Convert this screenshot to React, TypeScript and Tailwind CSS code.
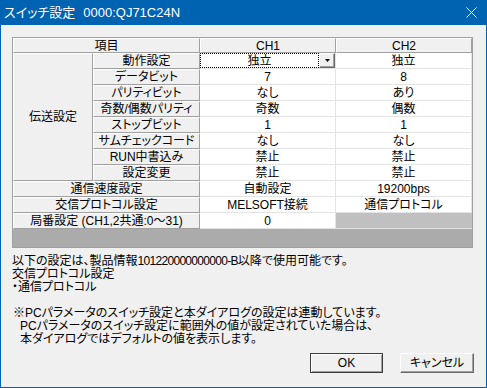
import React from "react";

const hdr =
  "flex items-center justify-center bg-[#f0f0f0] border border-t-white border-l-white border-r-[#a0a0a0] border-b-[#a0a0a0] leading-none";
const cell =
  "flex items-center justify-center bg-white border-r border-b border-[#e3e3e3] leading-none";

const subRows: [string, string, string][] = [
  ["データビット", "7", "8"],
  ["パリティビット", "なし", "あり"],
  ["奇数/偶数パリティ", "奇数", "偶数"],
  ["ストップビット", "1", "1"],
  ["サムチェックコード", "なし", "なし"],
  ["RUN中書込み", "禁止", "禁止"],
  ["設定変更", "禁止", "禁止"],
];

const wideRows: [string, string, string][] = [
  ["通信速度設定", "自動設定", "19200bps"],
  ["交信プロトコル設定", "MELSOFT接続", "通信プロトコル"],
];

function CloseIcon() {
  return (
    <svg width="11" height="11" viewBox="0 0 11 11" className="block">
      <path d="M0.5 0.5 L10.5 10.5 M10.5 0.5 L0.5 10.5" stroke="#fff" strokeWidth="1" />
    </svg>
  );
}

function DropButton() {
  return (
    <div className="flex h-[15px] w-[16px] items-center justify-center border border-t-white border-l-white border-r-[#696969] border-b-[#696969] bg-[#f0f0f0] shadow-[inset_-1px_-1px_0_#a0a0a0]">
      <svg width="5" height="3" viewBox="0 0 5 3" className="block">
        <path d="M0 0 H5 L2.5 3 Z" fill="#000" />
      </svg>
    </div>
  );
}

export default function App() {
  return (
    <div className="flex h-[388px] w-[487px] flex-col bg-[#0063b1] px-px pb-px font-['Liberation_Sans','Noto_Sans_CJK_JP',sans-serif] text-[12px] text-black [font-feature-settings:'palt']">
      {/* title bar */}
      <div className="flex h-[25px] items-center justify-between pl-[3px] pr-[9px] text-white">
        <div className="flex items-center gap-[8px] text-[13px] leading-none">
          <span>スイッチ設定</span>
          <span>0000:QJ71C24N</span>
        </div>
        <CloseIcon />
      </div>

      <div className="flex flex-1 flex-col bg-[#f0f0f0] px-[11px]">
        {/* grid */}
        <div className="mt-[12px] grid w-[461px] grid-cols-[80px_107px_136px_136px] grid-rows-[15px_repeat(11,16px)_18px] border border-[#a0a0a0]">
          <div className={`${hdr} col-span-2`}>項目</div>
          <div className={hdr}>CH1</div>
          <div className={hdr}>CH2</div>

          <div className={`${hdr} row-span-8`}>伝送設定</div>
          <div className={hdr}>動作設定</div>
          <div className="flex items-stretch bg-white border-r border-b border-[#e3e3e3]">
            <div className="flex flex-1 items-center justify-center border border-dotted border-black leading-none">
              独立
            </div>
            <DropButton />
          </div>
          <div className={cell}>独立</div>

          {subRows.map(([label, a, b]) => (
            <React.Fragment key={label}>
              <div className={hdr}>{label}</div>
              <div className={cell}>{a}</div>
              <div className={cell}>{b}</div>
            </React.Fragment>
          ))}

          {wideRows.map(([label, a, b]) => (
            <React.Fragment key={label}>
              <div className={`${hdr} col-span-2`}>{label}</div>
              <div className={cell}>{a}</div>
              <div className={cell}>{b}</div>
            </React.Fragment>
          ))}

          <div className={`${hdr} col-span-2`}>局番設定 (CH1,2共通:0～31)</div>
          <div className={cell}>0</div>
          <div className="border-b border-[#e3e3e3] bg-[#c0c0c0]" />

          <div className="col-span-4 bg-[#ababab]" />
        </div>

        {/* notes */}
        <div className="mt-[7px] leading-[13px]">
          <p>
            以下の設定は、製品情報<span className="tracking-[-0.7px]">101220000000000-B</span>以降で使用可能です。
          </p>
          <p>交信プロトコル設定</p>
          <p>・通信プロトコル</p>
          <p className="h-[13px]" />
          <p className="pl-px">※PCパラメータのスイッチ設定と本ダイアログの設定は連動しています。</p>
          <p className="pl-[8px]">PCパラメータのスイッチ設定に範囲外の値が設定されていた場合は、</p>
          <p className="pl-[8px]">本ダイアログではデフォルトの値を表示します。</p>
        </div>

        {/* buttons */}
        <div className="mt-[7px] flex justify-end gap-[17px] pr-px">
          <button className="flex h-[20px] w-[73px] items-center justify-center border border-[#3c3c3c] bg-[#f0f0f0] leading-none shadow-[inset_1px_1px_0_#fff,inset_-1px_-1px_0_#a0a0a0]">
            OK
          </button>
          <button className="flex h-[20px] w-[74px] items-center justify-center border border-t-white border-l-white border-r-[#696969] border-b-[#696969] bg-[#f0f0f0] leading-none shadow-[inset_-1px_-1px_0_#a0a0a0]">
            キャンセル
          </button>
        </div>
      </div>
    </div>
  );
}
